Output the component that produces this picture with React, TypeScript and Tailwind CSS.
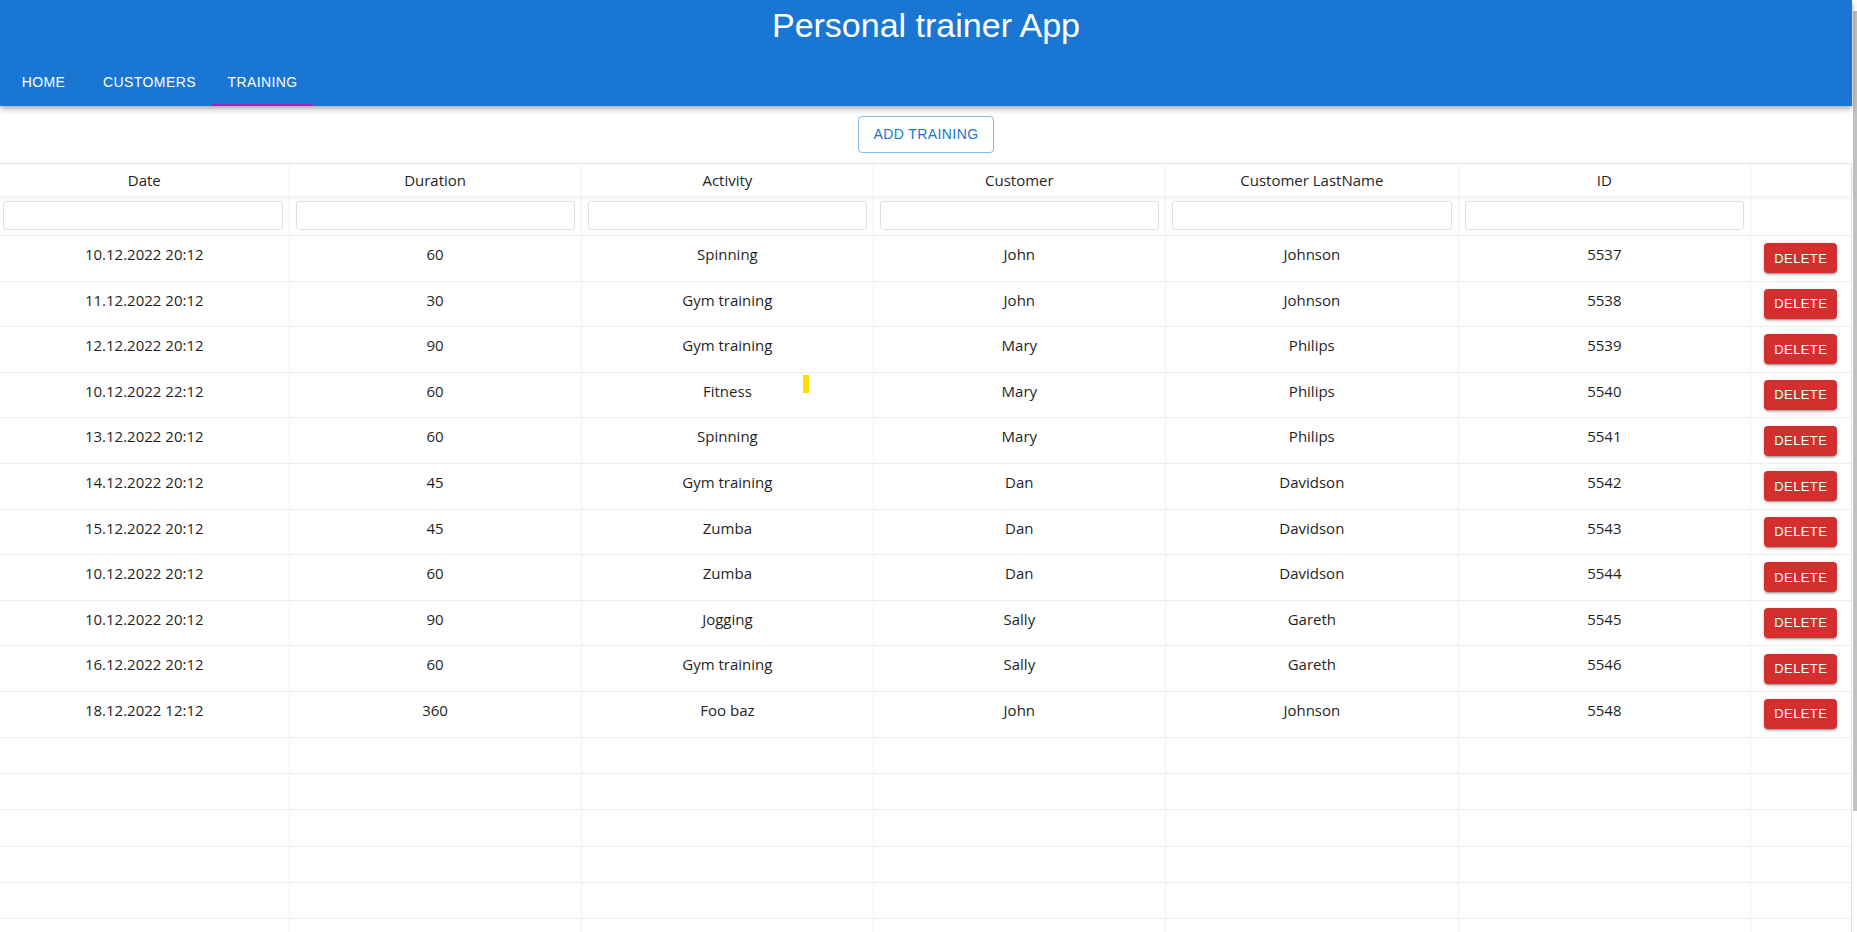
export default function App() {
	const trainings = [
		{ date: '10.12.2022 20:12', duration: 60, activity: 'Spinning', firstname: 'John', lastname: 'Johnson', id: 5537 },
		{ date: '11.12.2022 20:12', duration: 30, activity: 'Gym training', firstname: 'John', lastname: 'Johnson', id: 5538 },
		{ date: '12.12.2022 20:12', duration: 90, activity: 'Gym training', firstname: 'Mary', lastname: 'Philips', id: 5539 },
		{ date: '10.12.2022 22:12', duration: 60, activity: 'Fitness', firstname: 'Mary', lastname: 'Philips', id: 5540 },
		{ date: '13.12.2022 20:12', duration: 60, activity: 'Spinning', firstname: 'Mary', lastname: 'Philips', id: 5541 },
		{ date: '14.12.2022 20:12', duration: 45, activity: 'Gym training', firstname: 'Dan', lastname: 'Davidson', id: 5542 },
		{ date: '15.12.2022 20:12', duration: 45, activity: 'Zumba', firstname: 'Dan', lastname: 'Davidson', id: 5543 },
		{ date: '10.12.2022 20:12', duration: 60, activity: 'Zumba', firstname: 'Dan', lastname: 'Davidson', id: 5544 },
		{ date: '10.12.2022 20:12', duration: 90, activity: 'Jogging', firstname: 'Sally', lastname: 'Gareth', id: 5545 },
		{ date: '16.12.2022 20:12', duration: 60, activity: 'Gym training', firstname: 'Sally', lastname: 'Gareth', id: 5546 },
		{ date: '18.12.2022 12:12', duration: 360, activity: 'Foo baz', firstname: 'John', lastname: 'Johnson', id: 5548 },
	];

	const columns = ['Date', 'Duration', 'Activity', 'Customer', 'Customer LastName', 'ID'];
	const grid = 'grid grid-cols-[289.5px_292.2px_292.4px_291.5px_293.5px_291.5px_1fr]';
	const cell = 'flex items-center justify-center border-r border-[#f3f3f3]';

	return (
		<div className="flex h-screen overflow-hidden bg-white">
			<div className="relative flex-1 min-w-0 flex flex-col">
				{/* App bar */}
				<header className="relative z-20 bg-[#1976d2] text-white shadow-[0_2px_4px_-1px_rgba(0,0,0,0.2),0_4px_5px_0_rgba(0,0,0,0.14),0_1px_10px_0_rgba(0,0,0,0.12)] font-['Liberation_Sans',Arial,sans-serif]">
					<div className="h-[58px] pt-[4px] text-center text-[34px] leading-[42px]">Personal trainer App</div>
					<nav className="flex h-[48px] text-[14px] uppercase tracking-[0.4px]">
						<div className="w-[87px] flex items-center justify-center">Home</div>
						<div className="w-[125px] flex items-center justify-center">Customers</div>
						<div className="relative w-[101px] flex items-center justify-center">
							Training
							<span className="absolute left-0 right-0 bottom-0 h-[2px] bg-[#9c27b0]" />
						</div>
					</nav>
				</header>

				<div className="flex justify-center pt-[10px] pb-[10px]">
					<button className="h-[37px] px-[15px] rounded-[4px] border border-[#1976d2]/50 text-[#1976d2] text-[14px] tracking-[0.4px] uppercase font-['Liberation_Sans',Arial,sans-serif]">
						Add training
					</button>
				</div>

				{/* Grid */}
				<div className="flex-1 border-t border-r border-[#e2e2e2] font-['Open_Sans',sans-serif] text-[15px] text-[#1f1f1f]">
					<div className={`${grid} relative z-10 h-[32px] bg-white shadow-[0_2px_5px_rgba(0,0,0,0.07)]`}>
						{columns.map((c) => (
							<div key={c} className={cell}>{c}</div>
						))}
						<div />
					</div>
					<div className={`${grid} h-[40px] border-b border-[#ececec]`}>
						{columns.map((c, i) => (
							<div key={c} className={`flex items-center border-r border-[#f3f3f3] ${i === 0 ? 'pl-[3px] pr-[6px]' : 'px-[6px]'}`}>
								<input className="w-full h-[29px] rounded-[3px] border border-[#dfdfdf] bg-white outline-none" />
							</div>
						))}
						<div />
					</div>

					{trainings.map((t) => (
						<div key={t.id} className={`${grid} h-[45.6px] border-b border-[#ececec]`}>
							<div className={`${cell} pb-[8px]`}>{t.date}</div>
							<div className={`${cell} pb-[8px]`}>{t.duration}</div>
							<div className={`${cell} pb-[8px]`}>{t.activity}</div>
							<div className={`${cell} pb-[8px]`}>{t.firstname}</div>
							<div className={`${cell} pb-[8px]`}>{t.lastname}</div>
							<div className={`${cell} pb-[8px]`}>{t.id}</div>
							<div className="flex items-center justify-center">
								<button className="h-[30px] px-[10px] rounded-[4px] bg-[#d32f2f] text-white text-[13px] tracking-[0.4px] uppercase font-['Liberation_Sans',Arial,sans-serif] shadow-[0_3px_1px_-2px_rgba(0,0,0,0.2),0_2px_2px_0_rgba(0,0,0,0.14),0_1px_5px_0_rgba(0,0,0,0.12)]">
									Delete
								</button>
							</div>
						</div>
					))}

					{[0, 1, 2, 3, 4, 5].map((r) => (
						<div key={r} className={`${grid} h-[36.4px] border-b border-[#ececec]`}>
							{columns.map((c) => (
								<div key={c} className="border-r border-[#f3f3f3]" />
							))}
							<div />
						</div>
					))}
				</div>

				{/* text cursor mark */}
				<span className="absolute left-[803px] top-[375px] w-[6px] h-[18px] bg-[#ffe000]" />
			</div>

			{/* scrollbar */}
			<div className="w-[5px] bg-white">
				<div className="ml-[1px] mt-[11px] w-[4px] h-[800px] bg-[#c1c1c1]" />
			</div>
		</div>
	);
}
